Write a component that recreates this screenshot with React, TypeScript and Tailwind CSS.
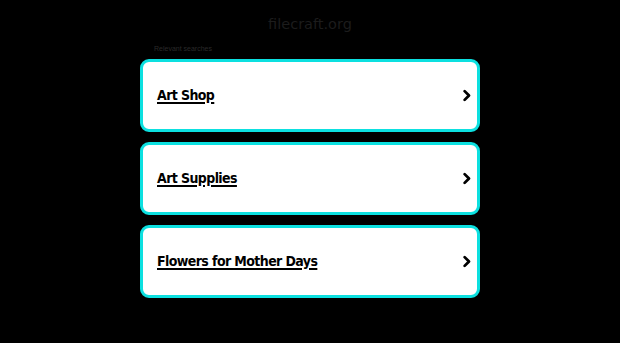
import React from 'react';

const searches = ['Art Shop', 'Art Supplies', 'Flowers for Mother Days'];

export default function App() {
  return (
    <div className="min-h-[343px] w-full bg-black font-['Liberation_Sans',Arial,sans-serif]">
      <div className="mx-auto w-[340px] pt-[14px]">
        <div className="text-center font-['DejaVu_Sans',Verdana,sans-serif] text-[14.5px] leading-[20px] text-[#1c1c1c]">
          filecraft.org
        </div>
        <div className="mt-[10px] pl-[14px] text-[7px] leading-[9px] text-[#2a2a2a]">Relevant searches</div>
        <div className="mt-[6px] flex flex-col gap-[10px]">
          {searches.map((s) => (
            <div
              key={s}
              className="flex h-[73px] items-center justify-between rounded-[9px] border-[3px] border-[#0ce0e0] bg-white pl-[14px] pr-[3px]"
            >
              <span className="font-['DejaVu_Sans_Condensed','DejaVu_Sans',Verdana,sans-serif] text-[14px] font-bold tracking-[-0.6px] text-black underline decoration-2 underline-offset-2">
                {s}
              </span>
              <svg width="15" height="15" viewBox="0 0 24 24" fill="none" stroke="black" strokeWidth="4.5" strokeLinecap="round" strokeLinejoin="round">
                <path d="M9 5l7 7-7 7" />
              </svg>
            </div>
          ))}
        </div>
      </div>
    </div>
  );
}
